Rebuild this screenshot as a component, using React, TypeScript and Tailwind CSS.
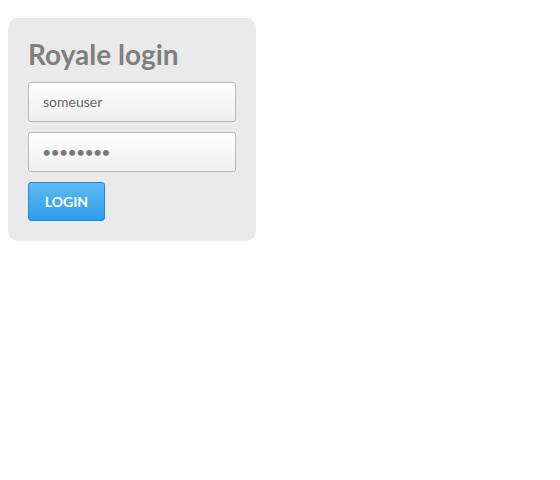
import React from 'react'

// Royale login panel
export default function App() {
  return (
    <div className="min-h-[480px] w-[560px] bg-white" style={{ fontFamily: 'Lato, "Open Sans", sans-serif' }}>
      <div className="pt-[18px] pl-2">
        <form
          className="w-[248px] rounded-[10px] bg-[#eaeaea] p-5"
          onSubmit={e => e.preventDefault()}
        >
          <h1 className="text-[28px] leading-[1.2] font-bold text-[#7f7f7f]">Royale login</h1>
          <input
            type="text"
            readOnly
            value="someuser"
            className="mt-[10px] block h-10 w-full rounded-[3px] border border-[#b8b8b8] bg-gradient-to-b from-white to-[#efefef] px-[14px] text-[14px] text-[#666] outline-none"
          />
          <input
            type="password"
            readOnly
            value="password"
            className="mt-[10px] block h-10 w-full rounded-[3px] border border-[#b8b8b8] bg-gradient-to-b from-white to-[#efefef] px-[13px] text-[16px] tracking-[-0.8px] text-[#777] outline-none"
          />
          <button
            type="submit"
            className="mt-[10px] block h-[39px] w-[77px] rounded-[3px] border border-[#1f8ad9] bg-gradient-to-b from-[#5cbaf6] to-[#2d9de9] pt-px text-[14px] font-bold text-white"
          >
            LOGIN
          </button>
        </form>
      </div>
    </div>
  )
}
